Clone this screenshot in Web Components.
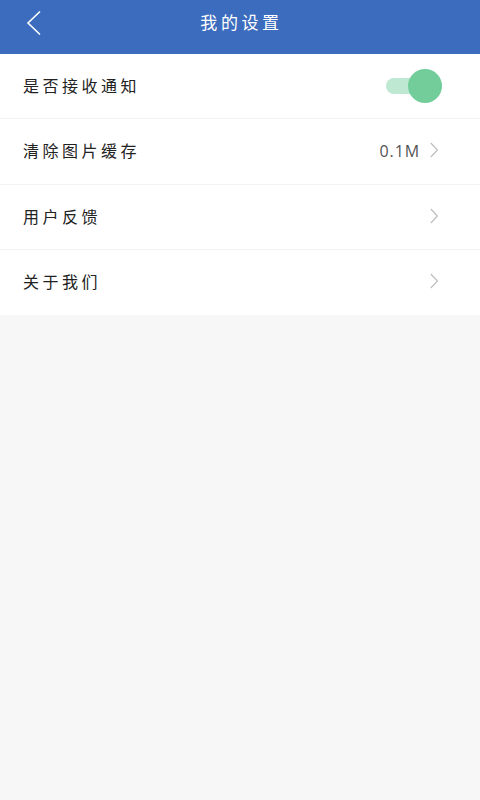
<!DOCTYPE html>
<html lang="zh">
<head>
<meta charset="utf-8">
<title>我的设置</title>
<style>
  html, body { margin: 0; height: 100%; }
  body { background: #f7f7f7; font-family: "Noto Sans CJK SC", "Noto Sans", sans-serif; }
</style>
</head>
<body>
<settings-page>
  <app-header>我的设置</app-header>
  <settings-list>
    <settings-row label="是否接收通知"><toggle-switch checked></toggle-switch></settings-row>
    <settings-row label="清除图片缓存" value="0.1M" chevron></settings-row>
    <settings-row label="用户反馈" chevron></settings-row>
    <settings-row label="关于我们" chevron last></settings-row>
  </settings-list>
</settings-page>
<script>
"use strict";

(() => {
  customElements.define("settings-page", class extends HTMLElement {
    constructor() {
      super();
      this.attachShadow({mode: "open"}).innerHTML = `
      <style>
      :host {
        display: flex;
        flex-direction: column;
        min-height: 800px;
        background-color: #f7f7f7;
      }
      </style>
      <slot></slot>
      `;
    }
  });

  customElements.define("app-header", class extends HTMLElement {
    constructor() {
      super();
      this.attachShadow({mode: "open"}).innerHTML = `
      <style>
      :host {
        display: grid;
        grid-template-columns: 80px 1fr 80px;
        align-items: center;
        height: 54px;
        background-color: #3b6cbd;
        color: #fff;
      }
      #back {
        display: flex;
        padding-left: 26px;
      }
      #title {
        text-align: center;
        font-size: 17px;
        line-height: 44px;
        letter-spacing: 3.6px;
        padding-bottom: 12px;
        padding-left: 3px;
      }
      svg { display: block; margin-top: -10px; }
      </style>
      <div id="back">
        <svg width="16" height="26" viewBox="0 0 16 26" fill="none" stroke="#fff" stroke-width="1.6">
          <path d="M14 1.5 L2 13 L14 24.5"/>
        </svg>
      </div>
      <div id="title"><slot></slot></div>
      <div></div>
      `;
    }
  });

  customElements.define("settings-list", class extends HTMLElement {
    constructor() {
      super();
      this.attachShadow({mode: "open"}).innerHTML = `
      <style>
      :host {
        display: flex;
        flex-direction: column;
        background-color: #fff;
      }
      </style>
      <slot></slot>
      `;
    }
  });

  customElements.define("settings-row", class extends HTMLElement {
    constructor() {
      super();
      this.attachShadow({mode: "open"}).innerHTML = `
      <style>
      :host {
        display: flex;
        align-items: center;
        box-sizing: border-box;
        height: 65.25px;
        padding: 0 42px 0 23px;
        border-bottom: 1px solid #f3f3f3;
      }
      :host([last]) { border-bottom: 0; }
      #label {
        flex: 1;
        font-size: 16px;
        letter-spacing: 3.5px;
        color: #222;
        padding-bottom: 2px;
      }
      #value {
        font-family: "Open Sans", "Noto Sans", sans-serif;
        font-size: 16px;
        letter-spacing: 0.9px;
        color: #555;
        margin-right: 10px;
      }
      svg { display: none; margin-bottom: 2px; }
      :host([chevron]) svg { display: block; }
      </style>
      <div id="label"></div>
      <div id="value"></div>
      <slot></slot>
      <svg width="8" height="16" viewBox="0 0 8 16" fill="none" stroke="#bdbdbd" stroke-width="1.1">
        <path d="M0.8 1 L7.4 8 L0.8 15"/>
      </svg>
      `;
      this.shadowRoot.getElementById("label").textContent = this.getAttribute("label") || "";
      this.shadowRoot.getElementById("value").textContent = this.getAttribute("value") || "";
    }
  });

  customElements.define("toggle-switch", class extends HTMLElement {
    constructor() {
      super();
      this.attachShadow({mode: "open"}).innerHTML = `
      <style>
      :host {
        display: flex;
        align-items: center;
        width: 56px;
        height: 34px;
        margin-right: -4px;
      }
      #track {
        position: relative;
        width: 100%;
        height: 16px;
        border-radius: 8px;
        background-color: #bfe8d3;
      }
      #knob {
        position: absolute;
        right: 0;
        top: -9px;
        width: 34px;
        height: 34px;
        border-radius: 50%;
        background-color: #72cd9b;
      }
      </style>
      <div id="track"><div id="knob"></div></div>
      `;
    }
  });
})();
</script>
</body>
</html>
